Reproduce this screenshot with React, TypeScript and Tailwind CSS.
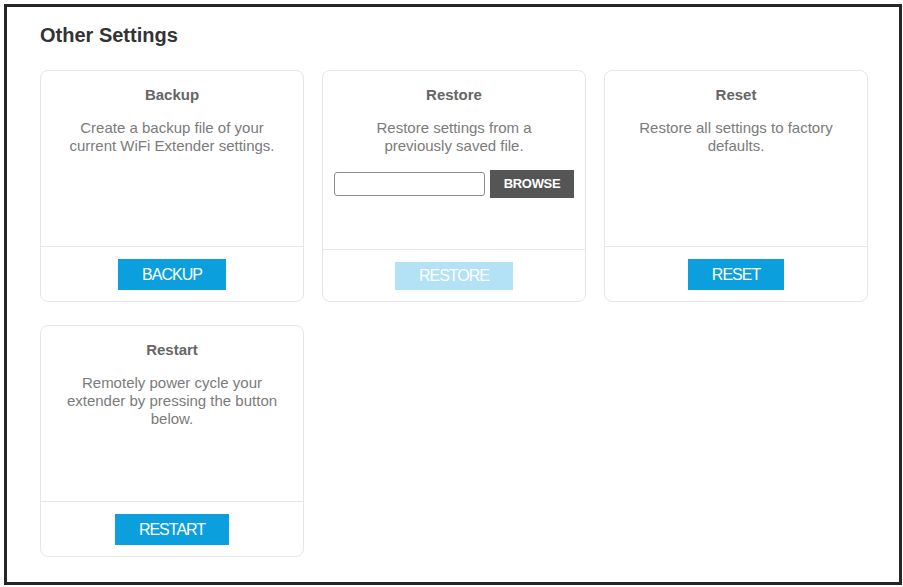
import React from "react";

type Action = {
  title: string;
  text: string;
  button: string;
  disabled?: boolean;
  withFile?: boolean;
};

const actions: Action[] = [
  {
    title: "Backup",
    text: "Create a backup file of your current WiFi Extender settings.",
    button: "BACKUP",
  },
  {
    title: "Restore",
    text: "Restore settings from a previously saved file.",
    button: "RESTORE",
    disabled: true,
    withFile: true,
  },
  {
    title: "Reset",
    text: "Restore all settings to factory defaults.",
    button: "RESET",
  },
  {
    title: "Restart",
    text: "Remotely power cycle your extender by pressing the button below.",
    button: "RESTART",
  },
];

function SettingCard({ action }: { action: Action }) {
  return (
    <div className="flex h-[232px] flex-col rounded-lg border border-[#e6e6e6] bg-white">
      <div className="flex flex-1 flex-col items-center px-5 pt-[15px] text-center">
        <h3 className="text-[15px] font-bold leading-[18px] text-[#666]">{action.title}</h3>
        <p className="mt-[15px] text-[15px] leading-[18px] text-[#7b7b7b]">{action.text}</p>

        {action.withFile && (
          <div className="mt-[15px] flex items-center gap-[5px]">
            <input
              type="text"
              readOnly
              className="h-6 w-[151px] rounded-[3px] border border-[#8c8c8c] bg-white outline-none"
            />
            <button className="h-7 w-[84px] bg-[#555] text-[13px] font-bold tracking-[-0.3px] text-white">
              BROWSE
            </button>
          </div>
        )}
      </div>

      <div className="flex justify-center border-t border-[#e6e6e6] pt-3 pb-[11px]">
        <button
          disabled={action.disabled}
          className={
            action.disabled
              ? "h-7 px-6 text-[16px] tracking-[-1px] text-white bg-[#b3e1f5]"
              : "h-[31px] px-6 text-[16px] tracking-[-1px] text-white bg-[#0ba0dd]"
          }
        >
          {action.button}
        </button>
      </div>
    </div>
  );
}

export default function App() {
  return (
    <div className="min-h-[587px] bg-white pt-1 pl-1 font-['Liberation_Sans',Arial,sans-serif]">
      <div className="h-[581px] w-[898px] border-[3px] border-[#262626] px-[33px] pt-4">
        <h2 className="text-[20px] font-bold leading-6 text-[#333]">Other Settings</h2>

        <div className="mt-[23px] grid grid-cols-3 gap-x-[18px] gap-y-[23px] w-[828px]">
          {actions.map((a) => (
            <SettingCard key={a.title} action={a} />
          ))}
        </div>
      </div>
    </div>
  );
}
